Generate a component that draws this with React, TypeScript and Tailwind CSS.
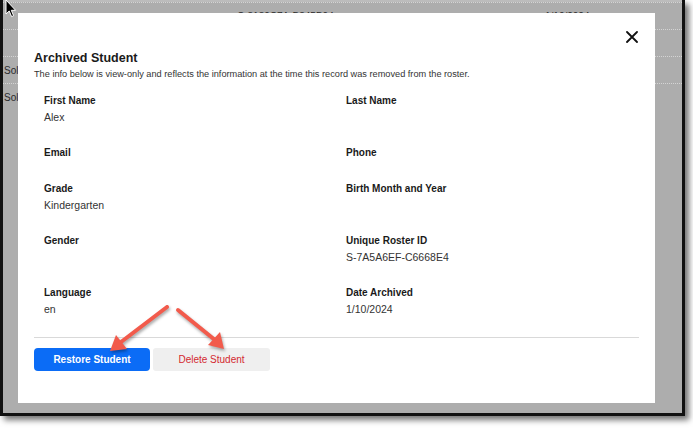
import React from "react";

const fields: { label: string; value?: string }[] = [
  { label: "First Name", value: "Alex" },
  { label: "Last Name" },
  { label: "Email" },
  { label: "Phone" },
  { label: "Grade", value: "Kindergarten" },
  { label: "Birth Month and Year" },
  { label: "Gender" },
  { label: "Unique Roster ID", value: "S-7A5A6EF-C6668E4" },
  { label: "Language", value: "en" },
  { label: "Date Archived", value: "1/10/2024" },
];

function Field({ label, value }: { label: string; value?: string }) {
  return (
    <div className="flex flex-col">
      <div className="h-4 text-[10px] leading-4 font-bold text-[#1a1a1a]">{label}</div>
      {value && <div className="h-4 text-[10.5px] leading-4 text-[#333]">{value}</div>}
    </div>
  );
}

function Cursor() {
  return (
    <svg className="absolute left-[2px] top-0" width="12" height="18" viewBox="0 0 12 18">
      <path d="M1 0 L1 14 L4.2 11 L6.6 16.6 L8.6 15.7 L6.3 10.3 L10.6 10.3 Z" fill="#000" stroke="#fff" strokeWidth="1" />
    </svg>
  );
}

function Arrows() {
  return (
    <svg
      className="pointer-events-none absolute left-0 top-0"
      width="693"
      height="428"
      style={{ filter: "drop-shadow(1px 2px 1.5px rgba(0,0,0,0.35))" }}
    >
      <g stroke="#f25b4c" strokeWidth="4" strokeLinecap="round" fill="#f25b4c">
        <line x1="167" y1="307" x2="121" y2="342" />
        <line x1="178" y1="310" x2="215" y2="340" />
      </g>
      <polygon points="110,351 116,335 127,349" fill="#f25b4c" />
      <polygon points="224,349 208,345 220,332" fill="#f25b4c" />
    </svg>
  );
}

export default function App() {
  return (
    <div className="relative h-[428px] w-[693px] overflow-hidden bg-white font-['Liberation_Sans',Arial,sans-serif]">
      <div className="relative h-[416px] w-[685px] overflow-hidden border-x-[3px] border-b-[3px] border-[#111] bg-[#adadad] shadow-[4px_4px_6px_rgba(0,0,0,0.55)]">
        {/* table behind the overlay */}
        <div className="h-[2px] bg-[#bcbcbc]" />
        <div className="border-t border-dotted border-[#d4d4d4]">
          <div className="relative flex h-[27px] items-center border-b border-dotted border-[#d4d4d4] text-[10px] text-[#2a2a2a]">
            <span className="absolute left-[234px]">C-3130C7A-B345B04</span>
            <span className="absolute left-[542px]">1/10/2024</span>
          </div>
          <div className="h-[27px] border-b border-dotted border-[#d4d4d4]" />
          <div className="flex h-[27px] items-center border-b border-dotted border-[#d4d4d4] pl-[1px] text-[10px] text-[#2a2a2a]">
            <span className="w-[14px] overflow-hidden whitespace-nowrap">Solomon</span>
          </div>
          <div className="flex h-[27px] items-center pl-[1px] text-[10px] text-[#2a2a2a]">
            <span className="w-[14px] overflow-hidden whitespace-nowrap">Solomon</span>
          </div>
        </div>

        {/* modal */}
        <div className="absolute left-[15px] top-[13px] flex h-[390px] w-[637px] flex-col bg-white px-4 pt-[37px]">
          <button className="absolute right-[17px] top-[18px] flex h-[12px] w-[12px] items-center justify-center">
            <svg width="12" height="12" viewBox="0 0 12 12">
              <path d="M1 1 L11 11 M11 1 L1 11" stroke="#111" strokeWidth="1.8" strokeLinecap="round" />
            </svg>
          </button>
          <h2 className="h-4 text-[12.5px] leading-4 font-bold text-[#1a1a1a]">Archived Student</h2>
          <p className="mt-[2px] h-3 text-[9.2px] leading-3 text-[#333]">
            The info below is view-only and reflects the information at the time this record was removed from the roster.
          </p>
          <div className="mt-[13px] grid grid-cols-[302px_1fr] gap-y-5 pl-[10px]">
            {fields.map((f) => (
              <Field key={f.label} label={f.label} value={f.value} />
            ))}
          </div>
          <div className="mt-5 border-t border-[#d9d9d9]" />
          <div className="mt-[10px] flex gap-[3px]">
            <button className="h-[23px] w-[116px] rounded-[4px] bg-[#0b6cf6] text-[10px] font-bold text-white">
              Restore Student
            </button>
            <button className="h-[23px] w-[117px] rounded-[3px] bg-[#efefef] text-[10px] text-[#d42a2f]">
              Delete Student
            </button>
          </div>
        </div>
        <Cursor />
      </div>
      <Arrows />
    </div>
  );
}
